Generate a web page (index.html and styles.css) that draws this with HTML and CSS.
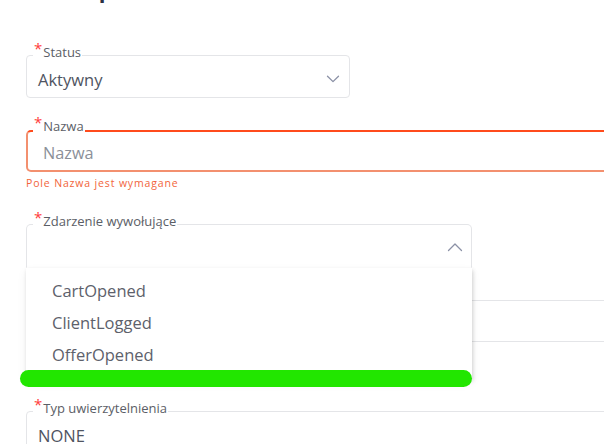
FILE: index.html
```html
<!DOCTYPE html>
<html lang="pl">
<head>
<meta charset="utf-8">
<title>Powiadomienie</title>
<link rel="stylesheet" href="styles.css">
</head>
<body>
<div class="page">
  <h1 class="title">Dane podstawowe</h1>

  <form class="form">
    <div class="field field-status">
      <span class="field-label"><span class="req">*</span>Status</span>
      <div class="control">
        <span class="value">Aktywny</span>
        <svg class="chevron" width="14" height="8" viewBox="0 0 14 8"><path d="M1.5 1.2 L7 6.6 L12.5 1.2" fill="none" stroke="#8b91a6" stroke-width="1.3" stroke-linecap="round" stroke-linejoin="round"/></svg>
      </div>
    </div>

    <div class="field field-name is-invalid">
      <span class="field-label"><span class="req">*</span>Nazwa</span>
      <div class="control">
        <span class="placeholder">Nazwa</span>
      </div>
    </div>
    <p class="error">Pole Nazwa jest wymagane</p>

    <div class="field field-event is-open">
      <span class="field-label"><span class="req">*</span>Zdarzenie wywołujące</span>
      <div class="control">
        <svg class="chevron chevron-up" width="16" height="10" viewBox="0 0 16 10"><path d="M1.5 8.5 L8 2 L14.5 8.5" fill="none" stroke="#8b91a6" stroke-width="1.3" stroke-linecap="round" stroke-linejoin="round"/></svg>
      </div>
      <ul class="menu">
        <li class="menu-item">CartOpened</li>
        <li class="menu-item">ClientLogged</li>
        <li class="menu-item">OfferOpened</li>
        <li class="menu-bar"></li>
      </ul>
    </div>

    <div class="field field-url">
      <div class="control"></div>
    </div>

    <div class="field field-auth">
      <span class="field-label"><span class="req">*</span>Typ uwierzytelnienia</span>
      <div class="control">
        <span class="value">NONE</span>
      </div>
    </div>
  </form>
</div>
</body>
</html>
```

FILE: styles.css
```css
html, body {
  margin: 0;
  padding: 0;
  background: #fff;
}

body {
  width: 604px;
  height: 444px;
  overflow: hidden;
  font-family: "Open Sans", "Noto Sans", sans-serif;
  color: #4f5461;
}

.page {
  padding-left: 26px;
}

.title {
  margin: -25px 0 0 10px;
  font-size: 22px;
  line-height: 28px;
  font-weight: 700;
  color: #2d3142;
}

.form {
  display: flex;
  flex-direction: column;
  margin: 0;
}

/* outlined field with the label sitting on the top border */
.field {
  position: relative;
}

.field-label {
  position: absolute;
  top: -10px;
  left: 7px;
  z-index: 1;
  padding: 0 1px 0 1px;
  background: #fff;
  font-size: 13px;
  line-height: 14px;
  color: #5b5e66;
  white-space: nowrap;
}

.req {
  position: relative;
  top: -3px;
  margin-right: 1px;
  font-size: 15px;
  line-height: 0;
  color: #ff3b3b;
}

.control {
  display: flex;
  align-items: center;
  box-sizing: border-box;
  height: 43px;
  padding: 5px 11px 0 11px;
  border: 1px solid #e4e5e8;
  border-radius: 4px;
  background: #fff;
}

.value {
  flex: 1;
  font-size: 16.5px;
  color: #4f5461;
}

.chevron {
  flex: none;
  display: block;
}

/* Status */
.field-status {
  width: 324px;
  margin-top: 52px;
}

.field-status .chevron {
  margin-right: -2px;
  margin-top: -1px;
}

/* Nazwa, invalid */
.field-name {
  width: 640px;
  margin-top: 32px;
}

.field-name .field-label {
  top: -11px;
}

.is-invalid .control {
  height: 42px;
  padding: 4px 16px 0 15px;
  border: 2px solid #f3906f;
  border-top: 2px solid #ff4b1c;
  border-radius: 5px;
}

.placeholder {
  font-size: 16.3px;
  color: #8b9099;
}

.error {
  margin: 4px 0 0 0;
  font-size: 10.5px;
  line-height: 14px;
  letter-spacing: 0.85px;
  color: #f2643a;
}

/* Zdarzenie, open select */
.field-event {
  width: 446px;
  margin-top: 34px;
  z-index: 5;
}

.field-event .control {
  height: 44px;
  justify-content: flex-end;
  padding: 0 8px 0 11px;
  border-bottom-color: transparent;
  border-radius: 5px 5px 0 0;
}

.chevron-up {
  margin-top: 2px;
}

.menu {
  position: absolute;
  top: 44px;
  left: 0;
  right: 0;
  margin: 0;
  padding: 7px 0 8px 0;
  list-style: none;
  background: #fff;
  box-shadow: 1px 2px 4px rgba(0, 0, 0, 0.16), 0 4px 10px rgba(0, 0, 0, 0.06);
}

.menu-item {
  height: 32px;
  padding-left: 26px;
  font-size: 16.5px;
  line-height: 32px;
  color: #5d616b;
}

.menu-bar {
  position: absolute;
  left: -6px;
  right: 0;
  bottom: -8px;
  height: 17px;
  border-radius: 9px;
  background: #22e600;
}

/* field under the open menu */
.field-url {
  width: 640px;
  margin-top: 32px;
}

.field-url .control {
  height: 42px;
}

/* Typ uwierzytelnienia */
.field-auth {
  width: 640px;
  margin-top: 69px;
}
```
